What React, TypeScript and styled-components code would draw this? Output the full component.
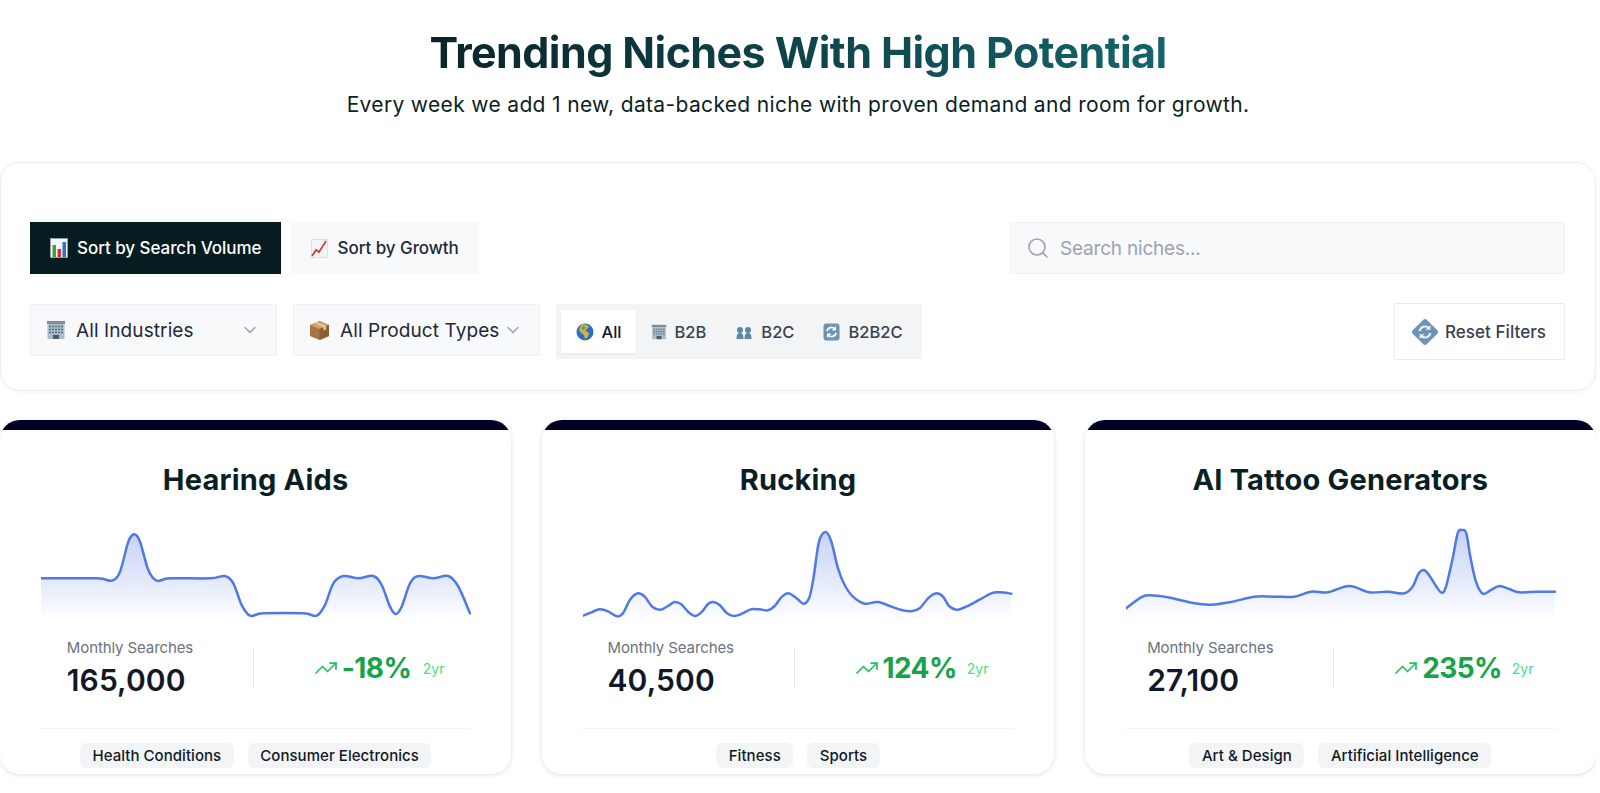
import React, { FC } from 'react'
import styled, { createGlobalStyle } from 'styled-components'
import { ChevronDown, Search, TrendingUp } from 'lucide-react'

type Point = [number, number]

interface Niche {
  title: string
  searches: string
  growth: string
  tags: string[]
  points: Point[]
  top: number
}

const NICHES: Niche[] = [
  {
    title: 'Hearing Aids',
    searches: '165,000',
    growth: '-18%',
    tags: ['Health Conditions', 'Consumer Electronics'],
    top: 360,
    points: [
      [123, 520], [290, 520], [335, 527], [360, 500], [385, 410], [403, 388], [420, 410], [445, 495], [470, 527],
      [510, 520], [630, 520], [675, 513], [700, 535], [725, 600], [750, 632], [790, 625], [910, 625], [950, 632],
      [975, 600], [1000, 535], [1030, 513], [1075, 520], [1120, 513], [1145, 540], [1170, 605], [1187, 627],
      [1205, 605], [1230, 535], [1255, 513], [1300, 520], [1345, 513], [1375, 545], [1410, 625],
    ],
  },
  {
    title: 'Rucking',
    searches: '40,500',
    growth: '124%',
    tags: ['Fitness', 'Sports'],
    top: 75,
    points: [
      [160, 347], [185, 337], [210, 328], [235, 334], [262, 349], [280, 340], [302, 298], [325, 280], [345, 290],
      [368, 320], [392, 329], [415, 318], [435, 306], [455, 313], [478, 338], [497, 348], [517, 335], [535, 312],
      [550, 306], [570, 315], [592, 340], [612, 348], [635, 342], [665, 328], [690, 328], [715, 331], [735, 318],
      [755, 292], [775, 280], [795, 290], [812, 305], [825, 311], [840, 290], [852, 230], [868, 125], [888, 96],
      [905, 125], [925, 205], [945, 255], [970, 290], [1005, 311], [1045, 306], [1085, 320], [1115, 330],
      [1145, 334], [1170, 325], [1195, 295], [1220, 280], [1240, 290], [1258, 318], [1280, 329], [1300, 324],
      [1330, 310], [1385, 280], [1410, 277], [1445, 281],
    ],
  },
  {
    title: 'AI Tattoo Generators',
    searches: '27,100',
    growth: '235%',
    tags: ['Art & Design', 'Artificial Intelligence'],
    top: 75,
    points: [
      [195, 325], [240, 292], [265, 286], [320, 292], [400, 310], [450, 314], [510, 306], [580, 290], [640, 290],
      [700, 290], [750, 275], [800, 277], [865, 258], [925, 277], [980, 275], [1030, 280], [1055, 260], [1072, 222],
      [1088, 210], [1104, 225], [1125, 258], [1142, 278], [1155, 260], [1175, 175], [1190, 100], [1203, 90],
      [1216, 100], [1228, 170], [1245, 245], [1265, 281], [1290, 270], [1315, 258], [1345, 267], [1375, 277],
      [1430, 275], [1482, 275],
    ],
  },
]

// catmull-rom through the sampled points
const toPath = (pts: Point[]) => {
  let d = `M${pts[0][0]} ${pts[0][1]}`
  for (let i = 0; i < pts.length - 1; i++) {
    const p0 = pts[Math.max(i - 1, 0)]
    const p1 = pts[i]
    const p2 = pts[i + 1]
    const p3 = pts[Math.min(i + 2, pts.length - 1)]
    const c1x = p1[0] + (p2[0] - p0[0]) / 6
    const c1y = p1[1] + (p2[1] - p0[1]) / 6
    const c2x = p2[0] - (p3[0] - p1[0]) / 6
    const c2y = p2[1] - (p3[1] - p1[1]) / 6
    d += ` C${c1x.toFixed(1)} ${c1y.toFixed(1)} ${c2x.toFixed(1)} ${c2y.toFixed(1)} ${p2[0]} ${p2[1]}`
  }
  return d
}

const BarChartIcon: FC = () => (
  <svg width="18" height="20" viewBox="0 0 18 20">
    <rect x="0.5" y="0.5" width="17" height="19" fill="#f4f6f8" stroke="#9aa3ab" strokeWidth="0.8" />
    <rect x="2.5" y="7" width="3.5" height="12" fill="#3aa24a" />
    <rect x="7.5" y="11" width="3.5" height="8" fill="#d9342b" />
    <rect x="12.5" y="4" width="3.5" height="15" fill="#2f6fd0" />
  </svg>
)

const GrowthIcon: FC = () => (
  <svg width="17" height="19" viewBox="0 0 17 19">
    <rect x="0.5" y="0.5" width="16" height="18" fill="#f3f4f6" stroke="#d5d8dc" strokeWidth="0.7" />
    <path d="M1 17 L5 11 L8 13 L15 2" fill="none" stroke="#d9363a" strokeWidth="1.7" />
  </svg>
)

const BuildingIcon: FC<{ small?: boolean }> = ({ small }) => (
  <svg width={small ? 16 : 20} height={small ? 18 : 20} viewBox="0 0 20 20">
    <rect x="1" y="1" width="18" height="3" fill="#7d8f9c" />
    <rect x="1.5" y="4" width="17" height="15" fill="#a9bcc8" />
    <path d="M3 6.5h14M3 9.5h14M3 12.5h14" stroke="#5d7383" strokeWidth="1.4" strokeDasharray="2 1" />
    <rect x="7" y="15" width="6" height="4" fill="#4b5b66" />
  </svg>
)

const BoxIcon: FC = () => (
  <svg width="21" height="21" viewBox="0 0 21 21">
    <path d="M10.5 1 L20 5 V16 L10.5 20 L1 16 V5 Z" fill="#a87440" />
    <path d="M1 5 L10.5 9 L20 5 L10.5 1 Z" fill="#cda26e" />
    <path d="M10.5 9 V20 L20 16 V5 Z" fill="#8d5f30" />
    <path d="M5 3 L14.5 7.2 V10.5 L17 9.5 V6 L7.5 2 Z" fill="#e4c9a0" />
  </svg>
)

const GlobeIcon: FC = () => (
  <svg width="18" height="18" viewBox="0 0 18 18">
    <circle cx="9" cy="9" r="8.5" fill="#2c6fc4" />
    <path d="M6 1.5 C9 1 12 2 13 4 C12 6 10 5.5 9.5 7.5 C11 9 13 9 13 11.5 C12 14 10.5 15 9.5 16 C8.5 14 8 12 6.5 10.5 C4.5 10 3 8 3.5 5.5 C4 4 5 2.5 6 1.5 Z" fill="#d2b23c" />
    <path d="M7 3 C9 3 10 4 9 5.5 C8 7 6 7 5.5 5.5 Z" fill="#5e9b3c" />
  </svg>
)

const BustsIcon: FC = () => (
  <svg width="18" height="16" viewBox="0 0 18 16">
    <g fill="#5d86ab">
      <circle cx="5" cy="6" r="3" />
      <path d="M1.5 15 C1.5 10.5 3 9 5 9 C7 9 8.5 10.5 8.5 15 Z" />
      <circle cx="13" cy="6" r="3" />
      <path d="M9.5 15 C9.5 10.5 11 9 13 9 C15 9 16.5 10.5 16.5 15 Z" />
    </g>
  </svg>
)

const RefreshIcon: FC = () => (
  <svg width="17" height="18" viewBox="0 0 17 18">
    <rect x="0.5" y="0.5" width="16" height="17" rx="3" fill="#6f93b5" />
    <path d="M4 8 A4.6 4.6 0 0 1 12 6 M13 10 A4.6 4.6 0 0 1 5 12" fill="none" stroke="#fff" strokeWidth="1.8" />
    <path d="M13 3 V7.4 H8.8 Z M4 15 V10.6 H8.2 Z" fill="#fff" />
  </svg>
)

const ResetIcon: FC = () => (
  <svg width="28" height="28" viewBox="0 0 26 26">
    <rect x="3.8" y="3.8" width="18.4" height="18.4" rx="2.5" transform="rotate(45 13 13)" fill="#6d93b6" />
    <path d="M8 12 A5.2 5.2 0 0 1 16.5 9.2 M18 14 A5.2 5.2 0 0 1 9.5 16.8" fill="none" stroke="#e8f0f6" strokeWidth="2" />
    <path d="M18 6.5 V11 H13.5 Z M8 19.5 V15 H12.5 Z" fill="#e8f0f6" />
  </svg>
)

const NicheCard: FC<{ niche: Niche; index: number }> = ({ niche, index }) => {
  const [first] = niche.points
  const last = niche.points[niche.points.length - 1]
  const line = toPath(niche.points)
  const bottom = niche.top + 276
  const gradientId = `fill-${index}`
  return (
    <Card>
      <CardBar />
      <CardTitle>{niche.title}</CardTitle>
      <Chart viewBox={`${first[0]} ${niche.top} 1290 285`} preserveAspectRatio="none">
        <defs>
          <linearGradient id={gradientId} x1="0" y1="0" x2="0" y2="1">
            <stop offset="0" stopColor="#c7d3f6" />
            <stop offset="0.6" stopColor="#e6ebfb" />
            <stop offset="1" stopColor="#fcfdff" />
          </linearGradient>
        </defs>
        <path d={`${line} L${last[0]} ${bottom} L${first[0]} ${bottom} Z`} fill={`url(#${gradientId})`} />
        <path d={line} fill="none" stroke="#5079e6" strokeWidth="7.5" strokeLinecap="round" />
      </Chart>
      <Stats>
        <SearchStat>
          <StatLabel>Monthly Searches</StatLabel>
          <StatValue>{niche.searches}</StatValue>
        </SearchStat>
        <StatDivider />
        <GrowthStat>
          <TrendingUp size={24} strokeWidth={1.75} color="#22c55e" />
          <GrowthValue>{niche.growth}</GrowthValue>
          <GrowthPeriod>2yr</GrowthPeriod>
        </GrowthStat>
      </Stats>
      <Tags>
        {niche.tags.map((tag) => (
          <Tag key={tag}>{tag}</Tag>
        ))}
      </Tags>
    </Card>
  )
}

export default function App() {
  return (
    <>
      <GlobalStyle />
      <Page>
        <Header>
          <Title>Trending Niches With High Potential</Title>
          <Subtitle>Every week we add 1 new, data-backed niche with proven demand and room for growth.</Subtitle>
        </Header>
        <Filters>
          <FilterRow>
            <SortGroup>
              <SortButton $active>
                <BarChartIcon />
                Sort by Search Volume
              </SortButton>
              <SortButton>
                <GrowthIcon />
                Sort by Growth
              </SortButton>
            </SortGroup>
            <SearchBox>
              <Search size={24} strokeWidth={1.6} color="#9ca3af" />
              <SearchInput placeholder="Search niches..." />
            </SearchBox>
          </FilterRow>
          <FilterRow>
            <FilterGroup>
              <SelectBox>
                <BuildingIcon />
                <SelectText>All Industries</SelectText>
                <ChevronDown size={20} strokeWidth={1.75} color="#9ca3af" />
              </SelectBox>
              <SelectBox>
                <BoxIcon />
                <SelectText>All Product Types</SelectText>
                <ChevronDown size={20} strokeWidth={1.75} color="#9ca3af" />
              </SelectBox>
              <Segments>
                <Segment $active>
                  <GlobeIcon />
                  All
                </Segment>
                <Segment>
                  <BuildingIcon small />
                  B2B
                </Segment>
                <Segment>
                  <BustsIcon />
                  B2C
                </Segment>
                <Segment>
                  <RefreshIcon />
                  B2B2C
                </Segment>
              </Segments>
            </FilterGroup>
            <ResetButton>
              <ResetIcon />
              Reset Filters
            </ResetButton>
          </FilterRow>
        </Filters>
        <Cards>
          {NICHES.map((niche, index) => (
            <NicheCard key={niche.title} niche={niche} index={index} />
          ))}
        </Cards>
      </Page>
    </>
  )
}

const GlobalStyle = createGlobalStyle`
  html,
  body {
    margin: 0;
    height: 100%;
    overflow: hidden;
    background: #fff;
    font-family: Inter, 'Noto Sans', sans-serif;
  }
  * {
    box-sizing: border-box;
  }
`

const Page = styled.div`
  width: 1596px;
  height: 793px;
  overflow: hidden;
`

const Header = styled.header`
  height: 162px;
  padding-top: 24px;
  text-align: center;
`

const Title = styled.h1`
  display: inline-block;
  margin: 0;
  font-size: 43px;
  line-height: 56px;
  font-weight: 700;
  letter-spacing: -0.57px;
  background: linear-gradient(90deg, #0a2429, #13646a);
  -webkit-background-clip: text;
  background-clip: text;
  color: transparent;
`

const Subtitle = styled.p`
  margin: 11px 0 0;
  font-size: 21px;
  line-height: 28px;
  letter-spacing: 0.34px;
  color: #0b1f24;
`

const Filters = styled.section`
  display: flex;
  flex-direction: column;
  gap: 29px;
  height: 229px;
  padding: 59px 30px 0 29px;
  border: 1px solid #ebedf0;
  border-radius: 20px;
  box-shadow: 0 1px 4px rgba(0, 0, 0, 0.05);
`

const FilterRow = styled.div`
  display: flex;
  justify-content: space-between;
  align-items: flex-start;
`

const SortGroup = styled.div`
  display: flex;
  gap: 10px;
`

const FilterGroup = styled.div`
  display: flex;
  align-items: flex-start;
  gap: 16px;
  margin-top: 1px;
`

const SortButton = styled.button<{ $active?: boolean }>`
  display: flex;
  align-items: center;
  gap: 9px;
  height: 52px;
  padding: 0 19px;
  border: 1px solid ${({ $active }) => ($active ? '#06191e' : '#f8f9fb')};
  background: ${({ $active }) => ($active ? '#061c20' : '#f8f9fb')};
  color: ${({ $active }) => ($active ? '#fff' : '#1f2937')};
  font: 500 17px Inter, sans-serif;
  letter-spacing: -0.05px;
  white-space: nowrap;
`

const SearchBox = styled.label`
  display: flex;
  align-items: center;
  gap: 8px;
  width: 555px;
  height: 52px;
  padding: 0 15px;
  background: #f8f9fb;
  border: 1px solid #f0f1f4;
`

const SearchInput = styled.input`
  flex: 1;
  border: 0;
  outline: 0;
  background: transparent;
  font: 400 19px Inter, sans-serif;
  letter-spacing: -0.2px;
  &::placeholder {
    color: #9ca3af;
  }
`

const SelectBox = styled.div`
  display: flex;
  align-items: center;
  width: 247px;
  height: 52px;
  padding: 0 16px 0 15px;
  background: #f8f9fb;
  border: 1px solid #f0f1f4;
`

const SelectText = styled.span`
  flex: 1;
  margin-left: 10px;
  font-size: 19px;
  color: #1f2937;
  letter-spacing: 0.1px;
  white-space: nowrap;
`

const Segments = styled.div`
  display: flex;
  height: 55px;
  padding: 6px 5px;
  background: #f3f4f6;
`

const Segment = styled.div<{ $active?: boolean }>`
  display: flex;
  align-items: center;
  gap: 8px;
  padding: 0 14.5px;
  font-size: 16.5px;
  font-weight: 500;
  color: ${({ $active }) => ($active ? '#111827' : '#374151')};
  background: ${({ $active }) => ($active ? '#fff' : 'transparent')};
  box-shadow: ${({ $active }) => ($active ? '0 1px 2px rgba(0, 0, 0, 0.06)' : 'none')};
`

const ResetButton = styled.button`
  display: flex;
  align-items: center;
  gap: 6px;
  width: 171px;
  height: 57px;
  padding: 0 16px;
  background: #fff;
  border: 1px solid #ececef;
  color: #374151;
  font: 500 17px Inter, sans-serif;
  letter-spacing: 0.05px;
  white-space: nowrap;
`

const Cards = styled.div`
  display: grid;
  grid-template-columns: repeat(3, 1fr);
  gap: 31px;
  margin-top: 29px;
`

const Card = styled.article`
  display: flex;
  flex-direction: column;
  height: 354px;
  overflow: hidden;
  border-radius: 20px;
  background: #fff;
  box-shadow: 0 1px 5px rgba(0, 0, 0, 0.13);
`

const CardBar = styled.div`
  height: 10px;
  background: #010125;
`

const CardTitle = styled.h3`
  margin: 32px 0 0;
  font-size: 29px;
  line-height: 36px;
  font-weight: 700;
  letter-spacing: 0.2px;
  text-align: center;
  color: #0a1f24;
`

const Chart = styled.svg`
  display: block;
  flex: none;
  width: 430px;
  height: 95px;
  margin: 27px 0 0 41px;
`

const Stats = styled.div`
  display: flex;
  justify-content: center;
  align-items: center;
  gap: 60px;
  margin: 18px 40px 0;
  padding-bottom: 30px;
  border-bottom: 1px solid #f3f4f6;
`

const SearchStat = styled.div`
  display: flex;
  flex-direction: column;
  width: 126px;
`

const StatLabel = styled.span`
  font-size: 15px;
  line-height: 20px;
  letter-spacing: -0.1px;
  white-space: nowrap;
  color: #6b7280;
`

const StatValue = styled.span`
  margin-top: 4px;
  font-size: 30px;
  line-height: 36px;
  font-weight: 600;
  letter-spacing: 0.1px;
  color: #111827;
`

const StatDivider = styled.div`
  width: 1px;
  height: 40px;
  background: #e5e7eb;
`

const GrowthStat = styled.div`
  display: flex;
  align-items: center;
  gap: 4px;
`

const GrowthValue = styled.span`
  min-width: 71px;
  font-size: 28px;
  line-height: 36px;
  font-weight: 700;
  letter-spacing: -0.6px;
  color: #16a34a;
`

const GrowthPeriod = styled.span`
  margin-left: 6px;
  font-size: 14px;
  color: #4ade80;
`

const Tags = styled.div`
  display: flex;
  justify-content: center;
  gap: 14px;
  margin-top: 14px;
`

const Tag = styled.span`
  height: 25px;
  padding: 0 12.5px;
  border-radius: 6px;
  background: #f3f4f6;
  font-size: 15px;
  line-height: 25px;
  font-weight: 500;
  letter-spacing: 0.05px;
  color: #111827;
`
